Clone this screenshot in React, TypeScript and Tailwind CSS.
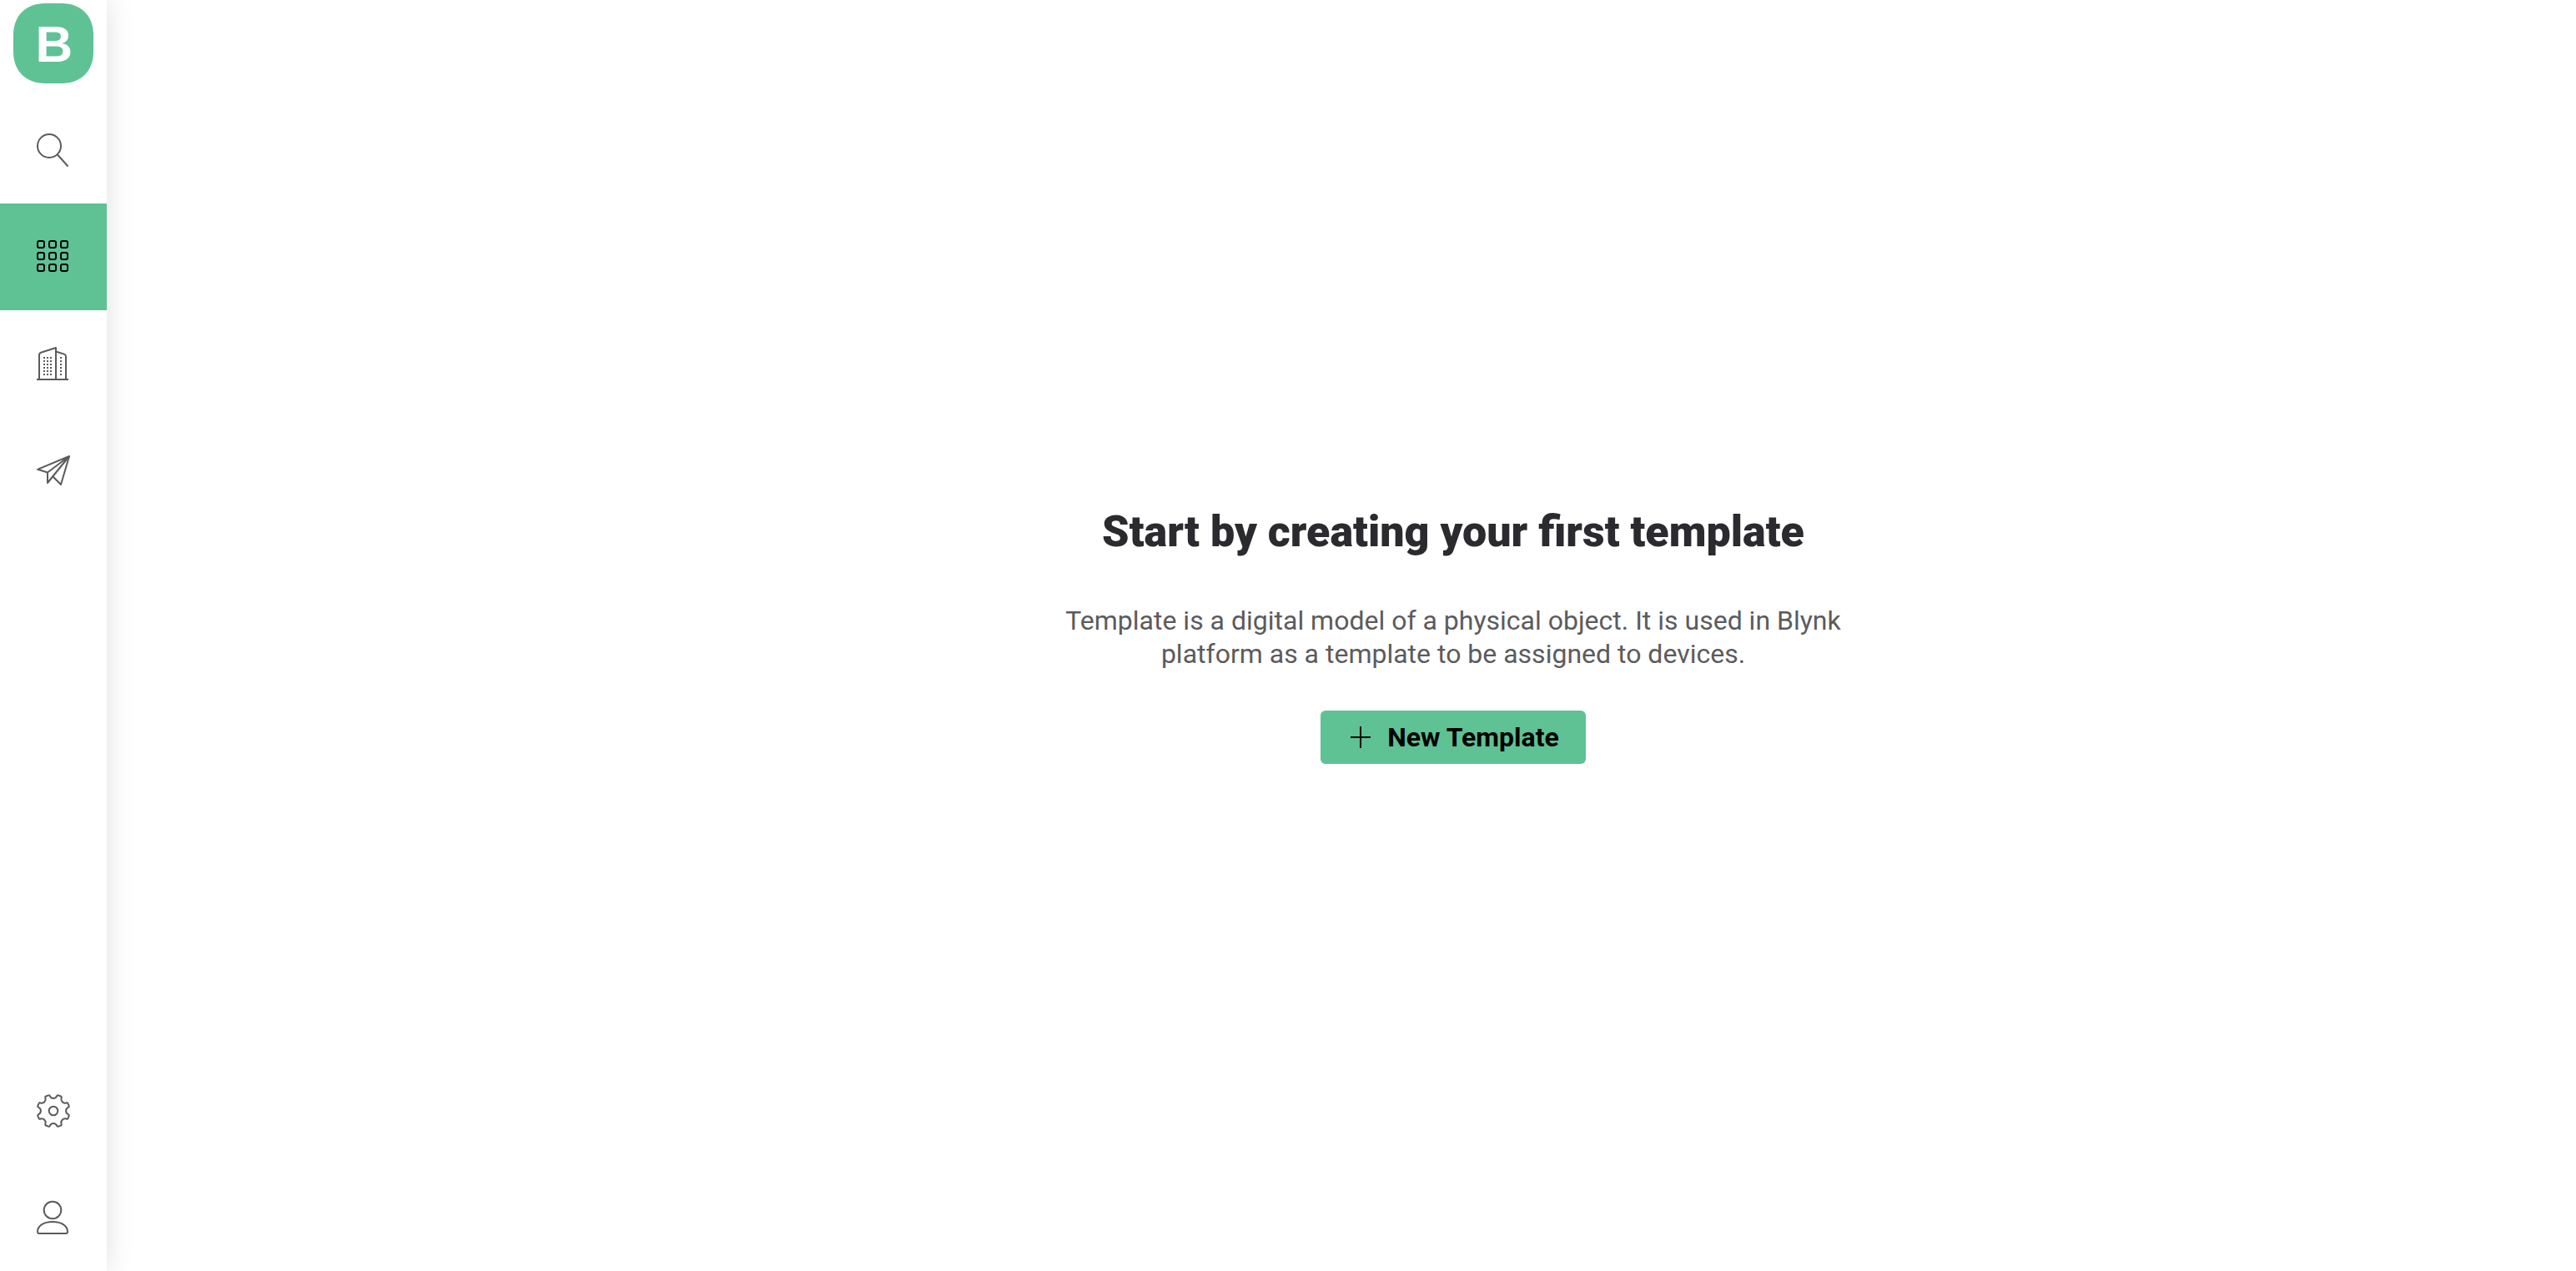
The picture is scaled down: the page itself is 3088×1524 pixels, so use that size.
import type { ReactNode } from 'react';

function polar(radius: number, degrees: number) {
  const a = (degrees * Math.PI) / 180;
  return `${(24 + radius * Math.sin(a)).toFixed(2)} ${(24 - radius * Math.cos(a)).toFixed(2)}`;
}

// Eight teeth separated by concave notches.
const gearPath =
  Array.from({ length: 8 }, (_, i) => {
    const t = i * 45;
    return `${i === 0 ? 'M' : 'L'}${polar(18, t - 13)} A4.6 4.6 0 0 0 ${polar(18, t + 13)} Q${polar(19.8, t + 14)} ${polar(19.6, t + 18)} L${polar(19.6, t + 27)} Q${polar(19.8, t + 31)} ${polar(18, t + 32)}`;
  }).join(' ') + 'Z';

function Icon({ children }: { children: ReactNode }) {
  return (
    <svg
      className="size-12"
      viewBox="0 0 48 48"
      fill="none"
      stroke="currentColor"
      strokeWidth="2"
      strokeLinejoin="round"
      aria-hidden="true"
    >
      {children}
    </svg>
  );
}

function SearchIcon() {
  return (
    <Icon>
      <circle cx="19" cy="19" r="14" />
      <path d="M29 29.5L41.5 43.5" />
    </Icon>
  );
}

function GridIcon() {
  return (
    <Icon>
      {[5, 19, 33].map((y) =>
        [5, 19, 33].map((x) => <rect key={`${x}-${y}`} x={x} y={y} width="8" height="8" rx="2" />),
      )}
    </Icon>
  );
}

function BuildingIcon() {
  return (
    <Icon>
      <path d="M4 43H42" />
      <path d="M7 43V13.5Q7 11.4 9 10.8L27 5V43" />
      <path d="M27 9.5L37 12.6Q39 13.3 39 15.5V43" />
      <g fill="currentColor" stroke="none">
        {[16, 20, 24, 28, 32, 36].map((y) =>
          [12, 16, 20, 32].map((x) => <rect key={`${x}-${y}`} x={x} y={y} width="2" height="2" />),
        )}
      </g>
    </Icon>
  );
}

function PlaneIcon() {
  return (
    <Icon>
      <path d="M43 7L5 22.8L17 26.5L43 7L17 39V26.5" />
      <path d="M23.5 31.5L33 41L43 7" />
    </Icon>
  );
}

function GearIcon() {
  return (
    <Icon>
      <path d={gearPath} />
      <circle cx="24" cy="24" r="5.3" />
    </Icon>
  );
}

function UserIcon() {
  return (
    <Icon>
      <circle cx="23" cy="15" r="10.3" />
      <path d="M7 43H39Q41 43 41 41C41 34 34 29 23 29S5 34 5 41Q5 43 7 43Z" />
    </Icon>
  );
}

function NavButton({ label, active, children }: { label: string; active?: boolean; children: ReactNode }) {
  return (
    <button
      type="button"
      aria-label={label}
      aria-current={active ? 'page' : undefined}
      className={
        active
          ? 'flex h-32 w-full items-center justify-center bg-[#5fc294] text-black'
          : 'flex h-32 w-full items-center justify-center text-[#5b5b5e]'
      }
    >
      {children}
    </button>
  );
}

export default function App() {
  return (
    <div className="flex min-h-screen bg-white font-['Roboto',sans-serif]">
      <nav className="flex w-32 shrink-0 flex-col bg-white shadow-[0_0_32px_rgba(0,0,0,0.13)]">
        <a href="#" aria-label="Blynk home" className="mb-4 flex justify-center pt-1">
          <svg className="size-24" viewBox="0 0 96 96" aria-hidden="true">
            <path
              fill="#5fc294"
              d="M38 0H58C81 0 96 15 96 38V58C96 81 81 96 58 96H38C15 96 0 81 0 58V38C0 15 15 0 38 0Z"
            />
            <text
              x="49"
              y="70"
              textAnchor="middle"
              fill="#fff"
              fontSize="62"
              fontWeight="700"
              fontFamily="Liberation Sans, sans-serif"
            >
              B
            </text>
          </svg>
        </a>
        <NavButton label="Search">
          <SearchIcon />
        </NavButton>
        <NavButton label="Templates" active>
          <GridIcon />
        </NavButton>
        <NavButton label="Organizations">
          <BuildingIcon />
        </NavButton>
        <NavButton label="Shipping">
          <PlaneIcon />
        </NavButton>
        <div className="mt-auto">
          <NavButton label="Settings">
            <GearIcon />
          </NavButton>
          <NavButton label="Profile">
            <UserIcon />
          </NavButton>
        </div>
      </nav>
      <main className="flex flex-1 flex-col items-center justify-center pl-[268px] text-center">
        <h1 className="text-[52px] leading-[60px] font-black text-[#2a2a2f]">
          Start by creating your first template
        </h1>
        <p className="mt-14 max-w-[960px] text-[32px] leading-10 text-[#5b5b5e]">
          Template is a digital model of a physical object. It is used in Blynk
          <br />
          platform as a template to be assigned to devices.
        </p>
        <button
          type="button"
          className="mt-12 flex h-16 items-center gap-4 rounded-md bg-[#5fc294] px-8 text-[32px] font-bold text-black"
        >
          <svg className="size-8" viewBox="0 0 32 32" stroke="currentColor" strokeWidth="2" aria-hidden="true">
            <path d="M4 16H28M16 3V29" />
          </svg>
          New Template
        </button>
      </main>
    </div>
  );
}
